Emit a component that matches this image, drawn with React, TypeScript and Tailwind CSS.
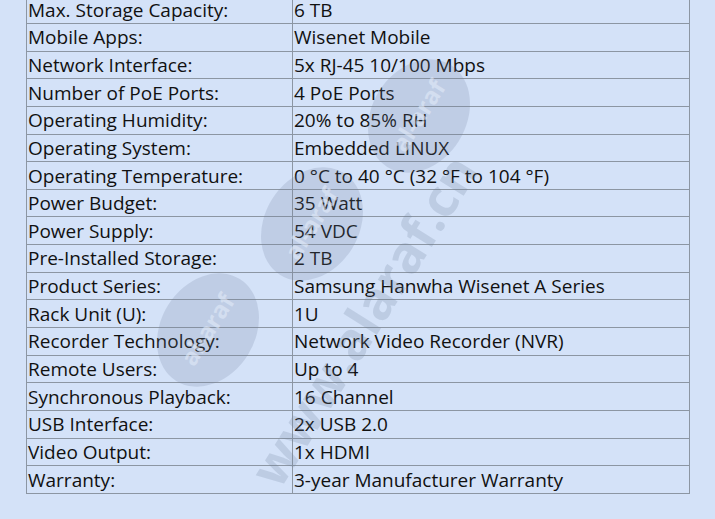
import React from "react";

const rows: [string, string][] = [
  ["Max. Storage Capacity:", "6 TB"],
  ["Mobile Apps:", "Wisenet Mobile"],
  ["Network Interface:", "5x RJ-45 10/100 Mbps"],
  ["Number of PoE Ports:", "4 PoE Ports"],
  ["Operating Humidity:", "20% to 85% RH"],
  ["Operating System:", "Embedded LINUX"],
  ["Operating Temperature:", "0 °C to 40 °C (32 °F to 104 °F)"],
  ["Power Budget:", "35 Watt"],
  ["Power Supply:", "54 VDC"],
  ["Pre-Installed Storage:", "2 TB"],
  ["Product Series:", "Samsung Hanwha Wisenet A Series"],
  ["Rack Unit (U):", "1U"],
  ["Recorder Technology:", "Network Video Recorder (NVR)"],
  ["Remote Users:", "Up to 4"],
  ["Synchronous Playback:", "16 Channel"],
  ["USB Interface:", "2x USB 2.0"],
  ["Video Output:", "1x HDMI"],
  ["Warranty:", "3-year Manufacturer Warranty"],
];

const blobs = [
  { cx: 208, cy: 330 },
  { cx: 312, cy: 224 },
  { cx: 419, cy: 116 },
];

function Watermark() {
  return (
    <svg
      className="absolute left-0 top-0 pointer-events-none"
      width="715"
      height="519"
      viewBox="0 0 715 519"
    >
      {blobs.map((b, i) => (
        <g key={i} transform={`rotate(-58 ${b.cx} ${b.cy})`}>
          <ellipse cx={b.cx} cy={b.cy} rx="60" ry="47" fill="#6f7f99" fillOpacity="0.2" />
          <text
            x={b.cx}
            y={b.cy + 8}
            fontSize="24"
            textAnchor="middle"
            fill="#e2eaf8"
            fillOpacity="0.6"
            fontWeight="700"
            fontFamily="'Open Sans', sans-serif"
          >
            al-araf
          </text>
        </g>
      ))}
      <text
        x="366"
        y="338"
        fill="#6f7f99"
        fillOpacity="0.22"
        fontSize="52"
        fontWeight="700"
        fontFamily="'Open Sans', sans-serif"
        textAnchor="middle"
        transform="rotate(-58 366 322)"
      >
        www.alaraf.cn
      </text>
    </svg>
  );
}

export default function App() {
  return (
    <div
      className="relative w-[715px] h-[519px] overflow-hidden bg-[#d4e2f8] text-[#111] text-[19px]"
      style={{ fontFamily: "'Open Sans', 'Noto Sans', sans-serif" }}
    >
      <div className="ml-[26px] mt-[-4.65px] w-[664px] border-l border-r border-t border-[#8c96a3]">
        {rows.map(([k, v]) => (
          <div key={k} className="flex h-[27.65px] border-b border-[#8c96a3] leading-[26px]">
            <div className="w-[266px] shrink-0 border-r border-[#8c96a3] pl-[1px] whitespace-nowrap flex items-center">
              {k}
            </div>
            <div className="flex-1 pl-[1px] whitespace-nowrap flex items-center">{v}</div>
          </div>
        ))}
      </div>
      <Watermark />
    </div>
  );
}
